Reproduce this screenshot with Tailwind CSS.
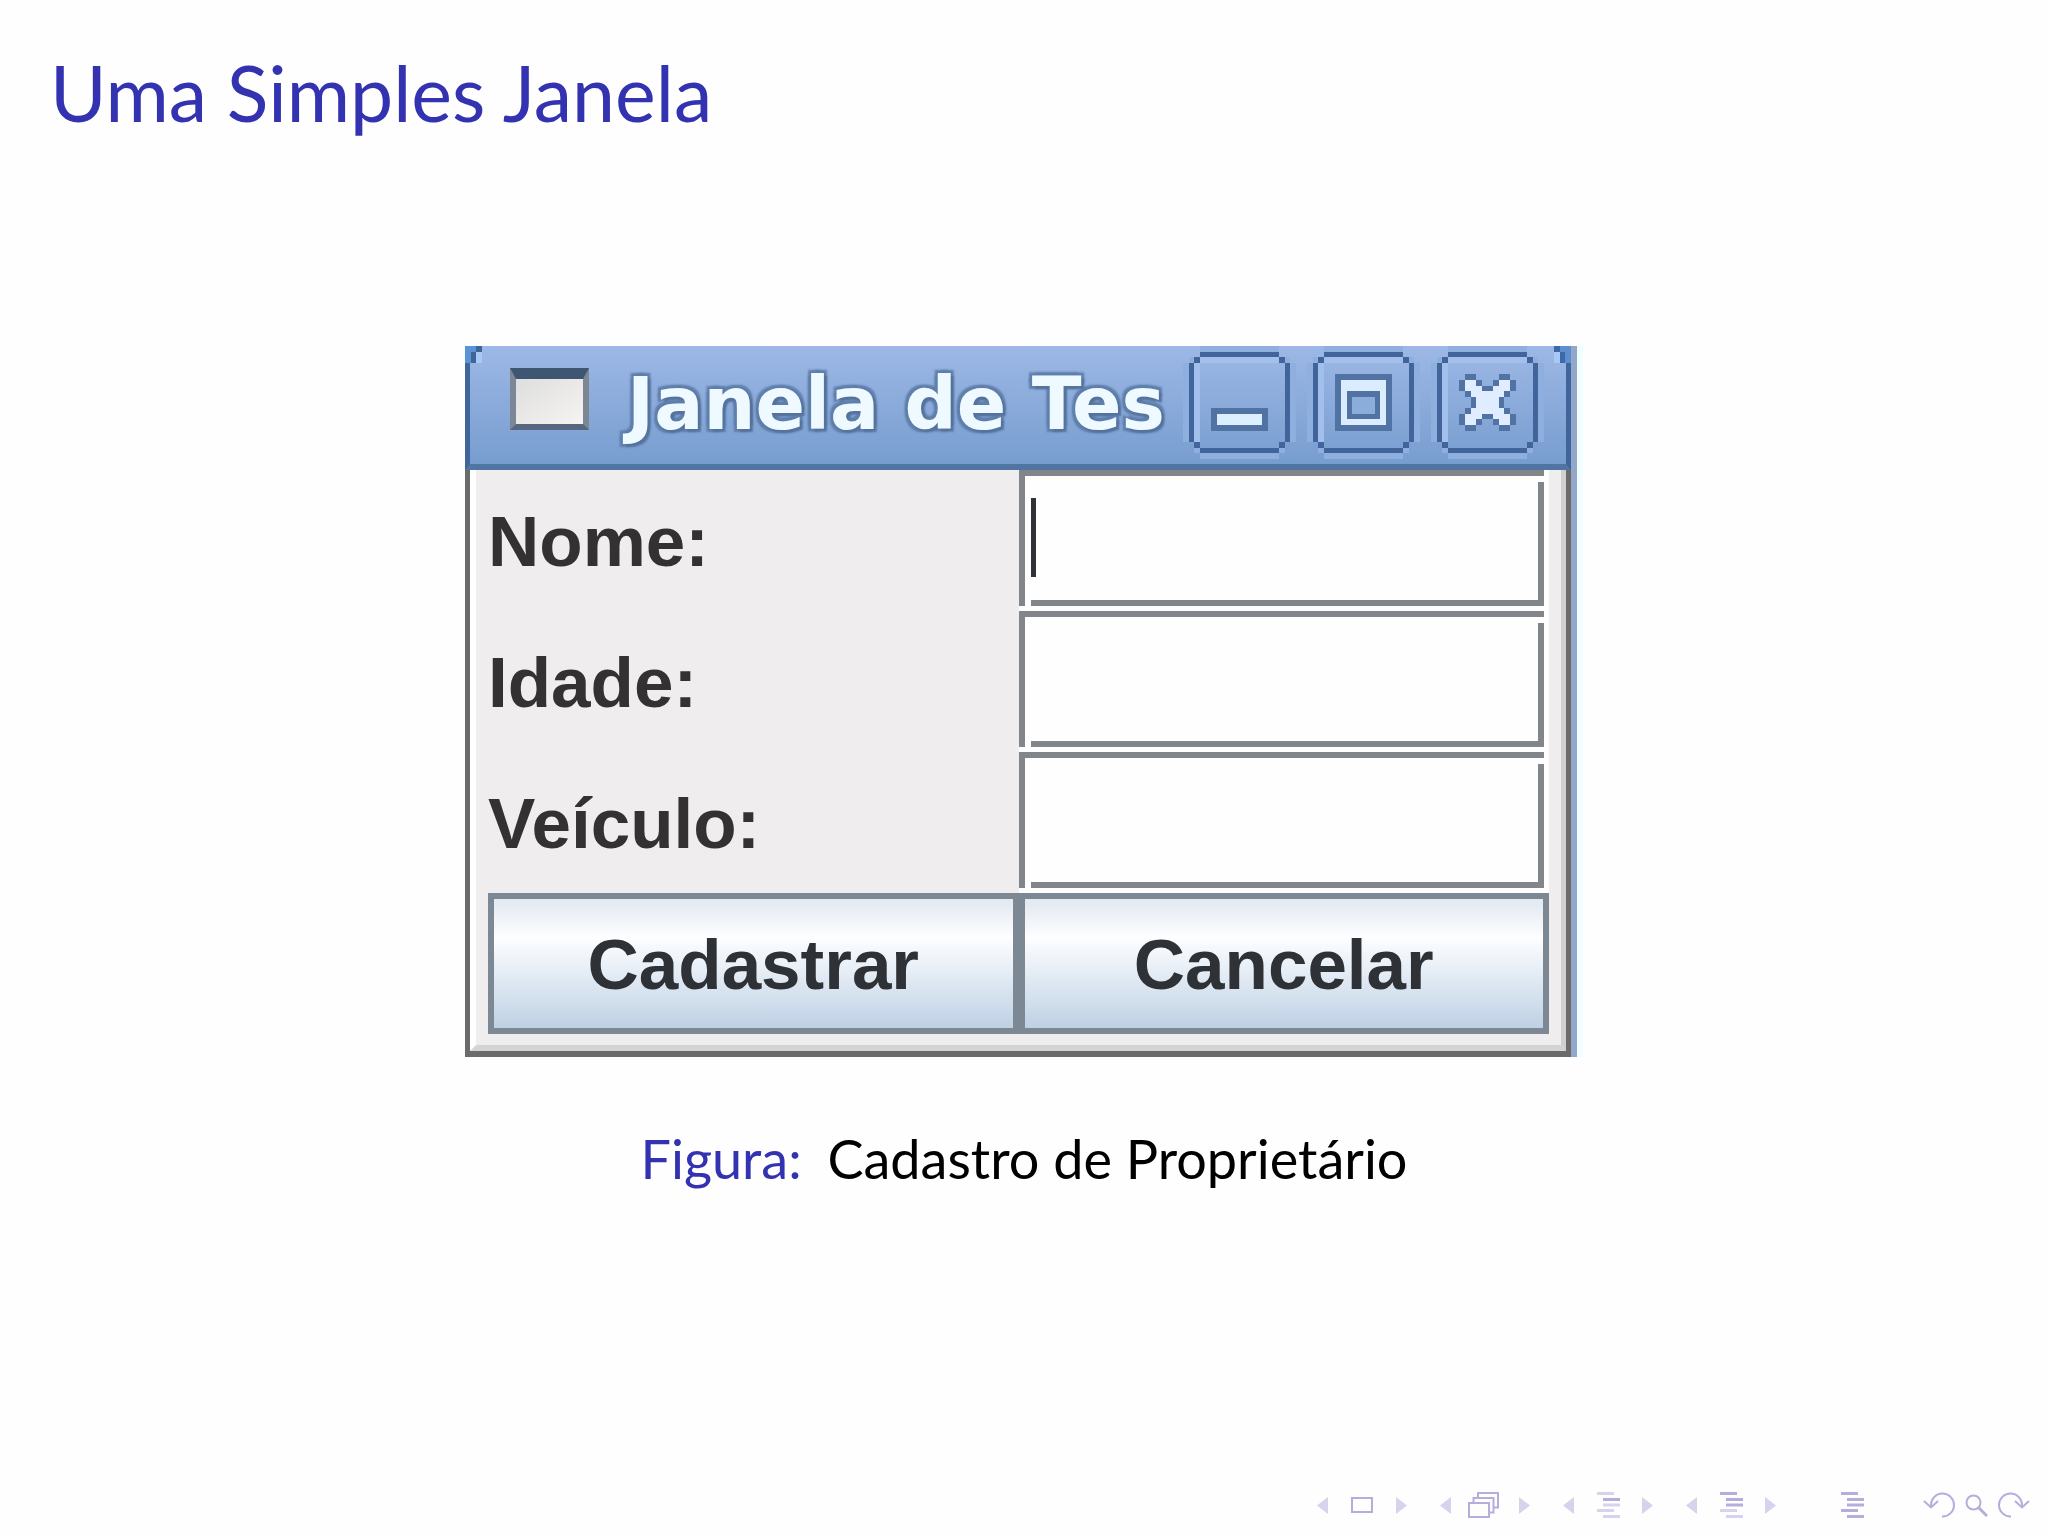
<!DOCTYPE html>
<html lang="pt-BR">
<head>
  <meta charset="UTF-8" />
  <meta name="viewport" content="width=device-width, initial-scale=1.0" />
  <title>Uma Simples Janela</title>
  <script src="https://cdn.jsdelivr.net/npm/@tailwindcss/browser@4"></script>
</head>
<body class="flex flex-col min-h-screen bg-[#fefefe] font-['Lato',sans-serif]">

  <!-- Slide title -->
  <header class="px-[50px] pt-11">
    <h1 class="text-[77px] leading-24 text-[#3333b2]">Uma Simples Janela</h1>
  </header>

  <main class="flex-1 flex flex-col items-center pt-[206px]">
    <figure class="flex flex-col items-center max-w-full">

      <!-- Window -->
      <div class="w-[1118px] max-w-full border-r-[6px] border-[#f1feff]">
      <section class="border-r-[6px] border-[#93a7c8]">

        <!-- Title bar -->
        <div class="relative flex items-start h-[124px] pr-[22px] pl-10 bg-linear-to-b from-[#9db8e6] to-[#779dcf] border-x-[5px] border-b-[6px] border-x-[#40659a] border-b-[#5075a2]">
          <svg class="absolute top-0 -left-[5px] w-[17px] h-[17px]" viewBox="0 0 3 3" shape-rendering="crispEdges">
            <path fill="#5b93d6" d="M0 0h2v1H0zM0 1h1v2H0z" />
            <path fill="#3f6498" d="M2 0h1v1H2zM1 1h1v2H1z" />
            <path fill="#a9c8f4" d="M2 1h1v2H2z" />
          </svg>
          <svg class="absolute top-0 -right-[5px] w-[17px] h-[17px]" viewBox="0 0 3 3" shape-rendering="crispEdges">
            <path fill="#5f8ecf" d="M1 0h2v1H1zM2 1h1v2H2z" />
            <path fill="#3b6aa8" d="M0 0h1v1H0zM1 1h1v2H1z" />
            <path fill="#a9c8f4" d="M0 1h1v2H0z" />
          </svg>

          <span class="mt-[22px] w-[79px] h-[62px] shrink-0 border-[6px] border-t-[11px] border-t-[#3f5672] border-x-[#7d8694] border-b-[#56677f] bg-linear-to-br from-[#dedede] to-[#f6f4f2]"></span>
          <h2 class="flex-1 mt-2 pl-[38px] text-[73px] leading-25 font-bold whitespace-nowrap text-[#eefaff] font-['DejaVu_Sans',sans-serif] [text-shadow:3px_3px_2px_#54729c,-3px_-3px_2px_#5f7fab,3px_-3px_2px_#5f7fab,-3px_3px_2px_#5f7fab]">Janela de Tes</h2>

          <div class="flex shrink-0 gap-[11px]">
            <button type="button" aria-label="Minimizar" class="size-[113px]">
              <svg class="size-full" viewBox="0 0 20 20" shape-rendering="crispEdges">
                <path fill="#8fb0df" d="M3 0h14v1H3zM0 3h1v14H0zM19 3h1v14h-1zM3 19h14v1H3zM1 2h1v1H1zM18 2h1v1h-1zM2 18h1v1H2zM17 18h1v1h-1z" />
                <path fill="#a3c0ec" d="M3 2h14v1H3zM2 3h1v14H2z" />
                <path fill="#41659a" d="M3 1h14v1H3zM3 18h14v1H3zM1 3h1v14H1zM18 3h1v14h-1zM2 2h1v1H2zM17 2h1v1h-1zM2 17h1v1H2zM17 17h1v1h-1z" />
                <path fill="#5073a4" d="M5 11h10v4H5z" />
                <path fill="#dcefff" d="M6 12h8v2H6z" />
              </svg>
            </button>
            <button type="button" aria-label="Maximizar" class="size-[113px]">
              <svg class="size-full" viewBox="0 0 20 20" shape-rendering="crispEdges">
                <path fill="#8fb0df" d="M3 0h14v1H3zM0 3h1v14H0zM19 3h1v14h-1zM3 19h14v1H3zM1 2h1v1H1zM18 2h1v1h-1zM2 18h1v1H2zM17 18h1v1h-1z" />
                <path fill="#a3c0ec" d="M3 2h14v1H3zM2 3h1v14H2z" />
                <path fill="#41659a" d="M3 1h14v1H3zM3 18h14v1H3zM1 3h1v14H1zM18 3h1v14h-1zM2 2h1v1H2zM17 2h1v1h-1zM2 17h1v1H2zM17 17h1v1h-1z" />
                <path fill="#5073a4" d="M5 5h10v10H5z" />
                <path fill="#dcecff" d="M6 6h8v8H6z" />
                <path fill="#5073a4" d="M7 8h6v5H7z" />
                <path fill="#8badda" d="M8 9h4v3H8z" />
              </svg>
            </button>
            <button type="button" aria-label="Fechar" class="size-[113px]">
              <svg class="size-full" viewBox="0 0 20 20" shape-rendering="crispEdges">
                <path fill="#8fb0df" d="M3 0h14v1H3zM0 3h1v14H0zM19 3h1v14h-1zM3 19h14v1H3zM1 2h1v1H1zM18 2h1v1h-1zM2 18h1v1H2zM17 18h1v1h-1z" />
                <path fill="#a3c0ec" d="M3 2h14v1H3zM2 3h1v14H2z" />
                <path fill="#41659a" d="M3 1h14v1H3zM3 18h14v1H3zM1 3h1v14H1zM18 3h1v14h-1zM2 2h1v1H2zM17 2h1v1h-1zM2 17h1v1H2zM17 17h1v1h-1z" />
                <path fill="#5073a4" d="M6 5h2v1H6zM12 5h2v1h-2zM5 6h4v1H5zM11 6h4v1h-4zM5 7h10v1H5zM6 8h8v1H6zM7 9h6v2H7zM6 11h8v1H6zM5 12h10v1H5zM5 13h4v1H5zM11 13h4v1h-4zM6 14h2v1H6zM12 14h2v1h-2z" />
                <path fill="#e0ecff" d="M6 6h2v1H6zM12 6h2v1h-2zM6 7h3v1H6zM11 7h3v1h-3zM7 8h6v1H7zM8 9h4v2H8zM7 11h6v1H7zM6 12h3v1H6zM11 12h3v1h-3zM6 13h2v1H6zM12 13h2v1h-2z" />
              </svg>
            </button>
          </div>
        </div>

        <!-- Form -->
        <div class="border-[#6a6b6a] border-x-[5px] border-b-[6px]">
          <div class="border-l-[6px] border-l-white border-r-[5px] border-b-[6px] border-r-[#d0d0d0] border-b-[#d3d4d3] bg-[#efedee]">
            <form class="grid grid-cols-2 auto-rows-[141px] pl-3 pr-3 pb-[11px] text-[71px] font-bold text-[#333132] font-['Liberation_Sans',sans-serif]">
              <label for="nome" class="flex items-center pt-1">Nome:</label>
              <div class="relative pr-[5px] pb-[5px] bg-[#fefefe] before:absolute before:right-[5px] before:top-[6px] before:size-[6px] before:bg-[#fefefe] after:absolute after:left-[6px] after:bottom-[5px] after:size-[6px] after:bg-[#fefefe]">
                <input id="nome" type="text" class="block w-full h-full border-[6px] border-[#82868a] bg-[#fefefe] px-2 outline-none" />
                <span class="absolute left-3 top-7 w-[5px] h-[79px] bg-[#2f3236]"></span>
              </div>

              <label for="idade" class="flex items-center pt-1">Idade:</label>
              <div class="relative pr-[5px] pb-[5px] bg-[#fefefe] before:absolute before:right-[5px] before:top-[6px] before:size-[6px] before:bg-[#fefefe] after:absolute after:left-[6px] after:bottom-[5px] after:size-[6px] after:bg-[#fefefe]">
                <input id="idade" type="text" class="block w-full h-full border-[6px] border-[#82868a] bg-[#fefefe] px-2 outline-none" />
              </div>

              <label for="veiculo" class="flex items-center pt-1">Veículo:</label>
              <div class="relative pr-[5px] pb-[5px] bg-[#fefefe] before:absolute before:right-[5px] before:top-[6px] before:size-[6px] before:bg-[#fefefe] after:absolute after:left-[6px] after:bottom-[5px] after:size-[6px] after:bg-[#fefefe]">
                <input id="veiculo" type="text" class="block w-full h-full border-[6px] border-[#82868a] bg-[#fefefe] px-2 outline-none" />
              </div>

              <button type="button" class="pt-1 border-[6px] border-[#7c8894] bg-linear-to-b from-[#e2e8f1] via-[#fdfeff] via-30% to-[#bfd1e5] text-[#2e3236]">Cadastrar</button>
              <button type="button" class="pt-1 border-[6px] border-[#7c8894] bg-linear-to-b from-[#e2e8f1] via-[#fdfeff] via-30% to-[#bfd1e5] text-[#2e3236]">Cancelar</button>
            </form>
          </div>
        </div>
      </section>
      </div>

      <figcaption class="pt-[70px] text-[54px] leading-16 text-black">
        <span class="text-[#3333b2] mr-3">Figura:</span> Cadastro de Proprietário
      </figcaption>
    </figure>
  </main>

  <!-- Slide navigation -->
  <footer class="flex justify-end items-center pr-[18px] pb-[18px]">
    <nav class="flex items-center gap-[33px] text-[#b3aedb]">
      <div class="flex items-center justify-between w-[90px]">
        <a href="#" aria-label="Slide anterior"><svg class="block w-[11px] h-[17px]" viewBox="0 0 11 17"><path fill="#d6d3ed" d="M11 0v17L0 8.500z" /></svg></a>
        <a href="#" aria-label="Slide"><svg class="block w-[22px] h-[26px]" viewBox="0 0 22 26" fill="none" stroke="currentColor" stroke-width="2"><path d="M1 6h20v14H1z" /></svg></a>
        <a href="#" aria-label="Próximo slide"><svg class="block w-[11px] h-[17px]" viewBox="0 0 11 17"><path fill="#d6d3ed" d="M0 0v17l11-8.500z" /></svg></a>
      </div>
      <div class="flex items-center justify-between w-[90px]">
        <a href="#" aria-label="Quadro anterior"><svg class="block w-[11px] h-[17px]" viewBox="0 0 11 17"><path fill="#d6d3ed" d="M11 0v17L0 8.500z" /></svg></a>
        <a href="#" aria-label="Quadro" class="mr-1"><svg class="block w-[31px] h-[26px]" viewBox="0 0 31 26" fill="none" stroke="currentColor" stroke-width="2"><path d="M1 11h20v14H1zM5.500 11V6h20v14.500H21M10 6V1h20v14.500h-4.500" /></svg></a>
        <a href="#" aria-label="Próximo quadro"><svg class="block w-[11px] h-[17px]" viewBox="0 0 11 17"><path fill="#d6d3ed" d="M0 0v17l11-8.500z" /></svg></a>
      </div>
      <div class="flex items-center justify-between w-[90px]">
        <a href="#" aria-label="Subseção anterior"><svg class="block w-[11px] h-[17px]" viewBox="0 0 11 17"><path fill="#d6d3ed" d="M11 0v17L0 8.500z" /></svg></a>
        <a href="#" aria-label="Subseção"><svg class="block w-[23px] h-[26px]" viewBox="0 0 23 26"><path fill="#d6d3ed" d="M0 0h17v3H0zM6 11.500h17v3H6zM0 17h17v3H0zM6 23h17v3H6z" /><path fill="currentColor" d="M6 6h17v3H6z" /></svg></a>
        <a href="#" aria-label="Próxima subseção"><svg class="block w-[11px] h-[17px]" viewBox="0 0 11 17"><path fill="#d6d3ed" d="M0 0v17l11-8.500z" /></svg></a>
      </div>
      <div class="flex items-center justify-between w-[90px]">
        <a href="#" aria-label="Seção anterior"><svg class="block w-[11px] h-[17px]" viewBox="0 0 11 17"><path fill="#d6d3ed" d="M11 0v17L0 8.500z" /></svg></a>
        <a href="#" aria-label="Seção"><svg class="block w-[23px] h-[26px]" viewBox="0 0 23 26"><path fill="#d6d3ed" d="M0 17h17v3H0zM6 23h17v3H6z" /><path fill="currentColor" d="M0 0h17v3H0zM6 6h17v3H6zM6 11.500h17v3H6z" /></svg></a>
        <a href="#" aria-label="Próxima seção"><svg class="block w-[11px] h-[17px]" viewBox="0 0 11 17"><path fill="#d6d3ed" d="M0 0v17l11-8.500z" /></svg></a>
      </div>
      <a href="#" aria-label="Apresentação" class="ml-8"><svg class="block w-[23px] h-[26px]" viewBox="0 0 23 26"><path fill="currentColor" d="M0 0h17v3H0zM6 6h17v3H6zM6 11.500h17v3H6zM0 17h17v3H0zM6 23h17v3H6z" /></svg></a>
      <div class="flex items-center gap-[10px] ml-[26px]">
        <a href="#" aria-label="Voltar"><svg class="block w-8 h-[26px]" viewBox="0 0 32 26" fill="none" stroke="currentColor" stroke-width="2"><path d="M19 24.500A11.500 11.500 0 1 0 8 13.500v2" /><path d="M1 9l7 6.500L15 9" /></svg></a>
        <a href="#" aria-label="Buscar"><svg class="block w-[23px] h-[26px]" viewBox="0 0 23 26" fill="none" stroke="currentColor" stroke-width="2"><circle cx="8.500" cy="10.500" r="7" /><path stroke-width="3" d="M13.500 15.500l8.500 8.500" /></svg></a>
        <a href="#" aria-label="Avançar"><svg class="block w-8 h-[26px]" viewBox="0 0 32 26" fill="none" stroke="currentColor" stroke-width="2"><path d="M13 24.500A11.500 11.500 0 1 1 24 13.500v2" /><path d="M31 9l-7 6.500L17 9" /></svg></a>
      </div>
    </nav>
  </footer>

</body>
</html>
